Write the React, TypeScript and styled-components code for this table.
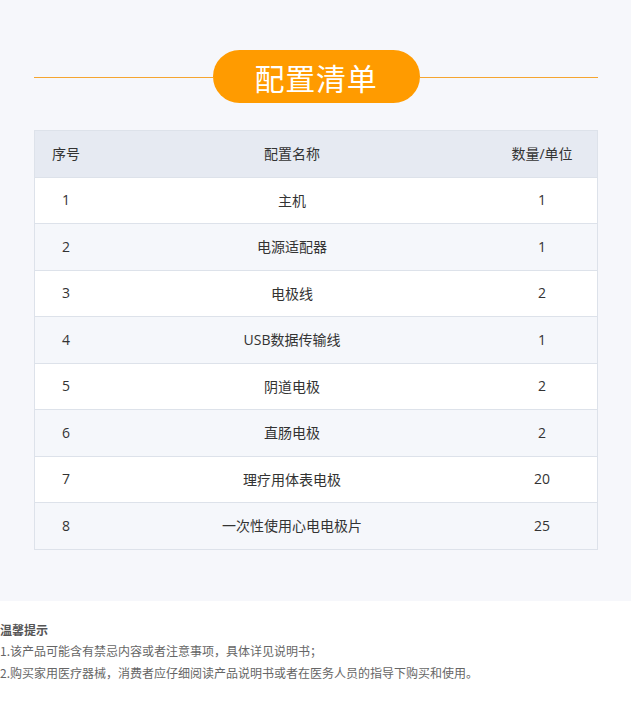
import React from "react";
import styled, { createGlobalStyle } from "styled-components";

const Global = createGlobalStyle`
  html, body { margin: 0; padding: 0; background: #fff; }
  body { font-family: "Open Sans", "Noto Sans CJK SC", sans-serif; }
  * { box-sizing: border-box; }
`;

const Page = styled.div`
  width: 631px;
  min-height: 706px;
  background: #fff;
`;

const Section = styled.section`
  background: #f6f7fb;
  padding: 50px 33px 51px 34px;
`;

const TitleRow = styled.div`
  display: flex;
  align-items: center;
  height: 53px;
  margin-bottom: 27px;
`;

const Line = styled.div`
  flex: 1;
  height: 1px;
  margin-top: 1px;
  background: #f5a530;
`;

const Pill = styled.div`
  width: 207px;
  height: 53px;
  border-radius: 27px;
  background: #ff9b00;
  color: #fff;
  font-family: "Noto Sans CJK SC", sans-serif;
  font-size: 30px;
  display: flex;
  align-items: center;
  justify-content: center;
  letter-spacing: 0.8px;
`;

const Table = styled.div`
  border: 1px solid #dde2ea;
  border-bottom: none;
`;

const Row = styled.div<{ $variant: "head" | "odd" | "even" }>`
  display: grid;
  grid-template-columns: 62px 390px 110px;
  height: 46.5px;
  align-items: center;
  border-bottom: 1px solid #dde2ea;
  background: ${(p) =>
    p.$variant === "head" ? "#e6eaf2" : p.$variant === "odd" ? "#ffffff" : "#f5f7fb"};
  color: #333;
  font-size: 14px;
  font-family: "Open Sans", "Noto Sans CJK SC", sans-serif;
`;

const Cell = styled.div`
  text-align: center;
  white-space: nowrap;
  padding-bottom: 1px;
`;

const Footer = styled.div`
  padding: 18px 0 0 0;
  font-size: 12px;
  line-height: 21.5px;
  color: #666;
  font-family: "Noto Sans CJK SC", sans-serif;
`;

const FooterTitle = styled.div`
  font-weight: bold;
  color: #555;
`;

const items: [string, string, string][] = [
  ["1", "主机", "1"],
  ["2", "电源适配器", "1"],
  ["3", "电极线", "2"],
  ["4", "USB数据传输线", "1"],
  ["5", "阴道电极", "2"],
  ["6", "直肠电极", "2"],
  ["7", "理疗用体表电极", "20"],
  ["8", "一次性使用心电电极片", "25"],
];

export default function App() {
  return (
    <Page>
      <Global />
      <Section>
        <TitleRow>
          <Line />
          <Pill>配置清单</Pill>
          <Line />
        </TitleRow>
        <Table>
          <Row $variant="head">
            <Cell>序号</Cell>
            <Cell>配置名称</Cell>
            <Cell>数量/单位</Cell>
          </Row>
          {items.map((it, i) => (
            <Row key={it[0]} $variant={i % 2 === 0 ? "odd" : "even"}>
              <Cell>{it[0]}</Cell>
              <Cell>{it[1]}</Cell>
              <Cell>{it[2]}</Cell>
            </Row>
          ))}
        </Table>
      </Section>
      <Footer>
        <FooterTitle>温馨提示</FooterTitle>
        <div>1.该产品可能含有禁忌内容或者注意事项，具体详见说明书；</div>
        <div>2.购买家用医疗器械，消费者应仔细阅读产品说明书或者在医务人员的指导下购买和使用。</div>
      </Footer>
    </Page>
  );
}
